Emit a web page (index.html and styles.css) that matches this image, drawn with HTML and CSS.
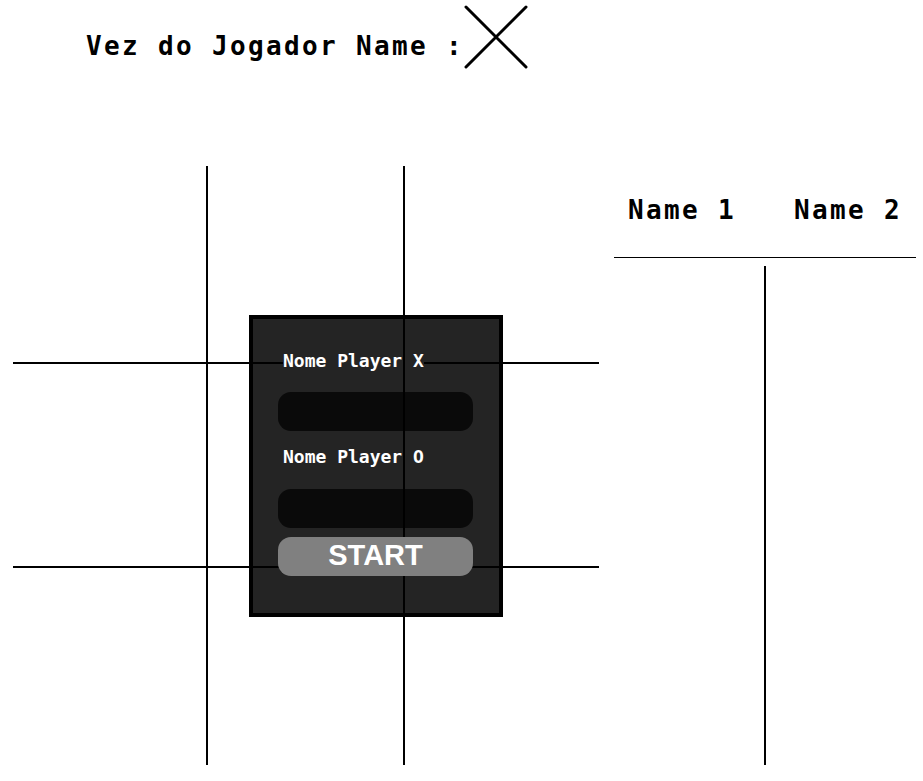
FILE: index.html
```html
<!DOCTYPE html>
<html lang="pt">
<head>
<meta charset="utf-8">
<title>Jogo da Velha</title>
<link rel="stylesheet" href="styles.css">
</head>
<body>
<header class="turn">
  <h1 class="turn-text">Vez do Jogador Name :</h1>
  <svg class="turn-mark" width="66" height="66" viewBox="0 0 66 66" aria-label="X"><path d="M3 3 L63 63 M63 3 L3 63" stroke="#000" stroke-width="3" stroke-linecap="round" fill="none"/></svg>
</header>
<main class="game">
  <section class="board">
    <div class="cell c1"></div>
    <div class="cell c2"></div>
    <div class="cell c3"></div>
    <div class="cell c4"></div>
    <div class="cell c5"></div>
    <div class="cell c6"></div>
    <div class="cell c7"></div>
    <div class="cell c8"></div>
    <div class="cell c9"></div>
    <div class="line line-v line-v1"></div>
    <div class="line line-v line-v2"></div>
    <div class="line line-h line-h1"></div>
    <div class="line line-h line-h2"></div>
    <form class="setup">
      <label class="setup-label" for="px">Nome Player X</label>
      <input class="setup-input input-x" id="px" type="text">
      <label class="setup-label label-o" for="po">Nome Player O</label>
      <input class="setup-input input-o" id="po" type="text">
      <button class="setup-start" type="button">START</button>
    </form>
  </section>
  <aside class="score">
    <div class="score-head"><span class="score-name">Name 1</span><span class="score-name">Name 2</span></div>
    <div class="score-body"><div class="score-col col-1"></div><div class="score-col col-2"></div></div>
  </aside>
</main>
</body>
</html>
```

FILE: styles.css
```css
html, body {
  margin: 0;
  padding: 0;
  background: #fff;
}
body {
  font-family: "DejaVu Sans Mono", "Liberation Mono", monospace;
  color: #000;
}
.turn {
  display: flex;
  align-items: flex-start;
  padding: 4px 0 0 86px;
  height: 66px;
}
.turn-text {
  margin: 27px 0 0 0;
  font-size: 26px;
  font-weight: bold;
  letter-spacing: 2.35px;
  line-height: 30px;
  white-space: nowrap;
}
.turn-mark {
  display: block;
  margin-left: -1px;
}
.game {
  display: flex;
  align-items: flex-start;
  margin-top: 96px;
  padding-left: 13px;
}
.board {
  position: relative;
  display: grid;
  grid-template-columns: 193px 2px 195px 2px 194px;
  grid-template-rows: 196px 2px 202px 2px 197px;
  flex: none;
}
.cell { background: transparent; }
.c1 { grid-area: 1 / 1; }
.c2 { grid-area: 1 / 3; }
.c3 { grid-area: 1 / 5; }
.c4 { grid-area: 3 / 1; }
.c5 { grid-area: 3 / 3; }
.c6 { grid-area: 3 / 5; }
.c7 { grid-area: 5 / 1; }
.c8 { grid-area: 5 / 3; }
.c9 { grid-area: 5 / 5; }
.line { background: #000; }
.line-v { grid-row: 1 / -1; z-index: 3; }
.line-v1 { grid-column: 2; }
.line-v2 { grid-column: 4; }
.line-h { grid-column: 1 / -1; z-index: 1; }
.line-h1 { grid-row: 2; }
.line-h2 { grid-row: 4; }
.setup {
  position: absolute;
  left: 236px;
  top: 149px;
  width: 254px;
  height: 302px;
  box-sizing: border-box;
  border: 4px solid #000;
  background: #242424;
  display: flex;
  flex-direction: column;
  align-items: flex-start;
  padding: 0 0 0 25px;
  margin: 0;
}
.setup-label,
.setup-input {
  position: relative;
  z-index: 2;
}
.setup-label {
  font-family: "DejaVu Sans Mono", monospace;
  font-weight: bold;
  font-size: 18px;
  line-height: 21px;
  color: #fff;
  background: #242424;
  margin: 31px 0 0 5px;
}
.label-o {
  margin-top: 15px;
}
.setup-input {
  display: block;
  width: 195px;
  height: 39px;
  box-sizing: border-box;
  border: none;
  border-radius: 13px;
  background: #0a0a0a;
  margin: 21px 0 0 0;
  padding: 0;
  outline: none;
}
.input-o {
  margin-top: 22px;
}
.setup-start {
  position: relative;
  z-index: 4;
  width: 195px;
  height: 39px;
  margin-top: 9px;
  border: none;
  border-radius: 13px;
  background: #808080;
  color: #fff;
  font-family: "Liberation Sans", Arial, sans-serif;
  font-weight: bold;
  font-size: 29px;
  line-height: 34px;
  padding: 0 0 4px 0;
}
.score {
  margin: 29px 0 0 15px;
  width: 302px;
  flex: none;
}
.score-head {
  display: flex;
  justify-content: space-between;
  padding: 0 14px 32px 14px;
  border-bottom: 1px solid #000;
}
.score-name {
  font-weight: bold;
  font-size: 26px;
  line-height: 30px;
  letter-spacing: 2.35px;
  white-space: nowrap;
}
.score-body {
  display: flex;
  margin-top: 8px;
  height: 499px;
}
.score-col { height: 100%; }
.col-1 {
  width: 150px;
  border-right: 2px solid #000;
}
.col-2 { width: 150px; }
```
